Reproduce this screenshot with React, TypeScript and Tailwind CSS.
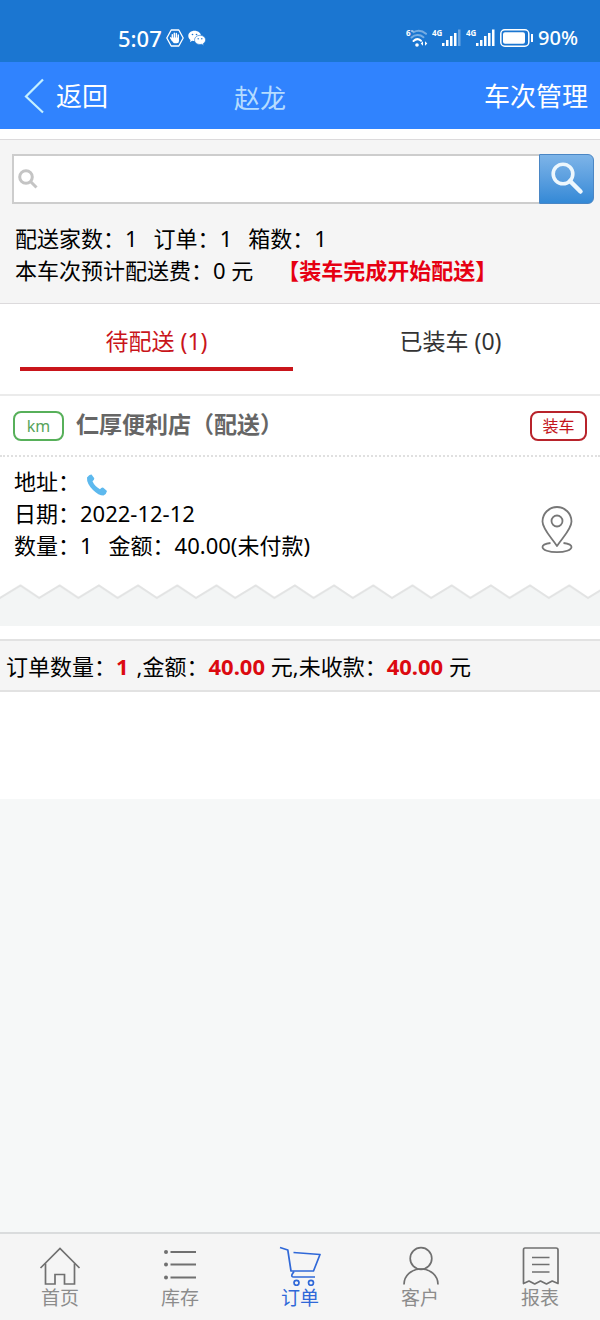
import React from 'react';

const summary = [
  { label: '配送家数：', value: '1' },
  { label: '订单：', value: '1' },
  { label: '箱数：', value: '1' },
];

const HomeIcon = () => (
  <svg viewBox="0 0 42 40" className="w-[42px] h-10" fill="none" stroke="currentColor" strokeWidth="1.7">
    <path d="M1.5 22 21 2.5 40.500 22" />
    <path d="M6.500 17.500V38H16v-9.500h9.500V38h10V17.500" />
  </svg>
);

const ListIcon = () => (
  <svg viewBox="0 0 42 40" className="w-[42px] h-10" fill="none" stroke="currentColor" strokeWidth="2">
    <path d="M11.500 6H37M11.500 18.500H37M11.500 31.500H37" />
    <g fill="currentColor" stroke="none">
      <circle cx="7" cy="6" r="2" />
      <circle cx="7" cy="18.500" r="2" />
      <circle cx="7" cy="31.500" r="2" />
    </g>
  </svg>
);

const CartIcon = () => (
  <svg viewBox="0 0 42 40" className="w-[42px] h-10" fill="none" stroke="currentColor" strokeWidth="1.700" strokeLinejoin="round">
    <path d="M1 1.500 8.800 4 12 25h22.500L41 8.500 14.500 6.500" />
    <path d="M15 25.500 13 28.500q-.8 2.500 1.500 2.500H36" />
    <circle cx="17.500" cy="36.800" r="2.500" />
    <circle cx="32" cy="36.800" r="2.500" />
  </svg>
);

const UserIcon = () => (
  <svg viewBox="0 0 42 40" className="w-[42px] h-10" fill="none" stroke="currentColor" strokeWidth="1.700">
    <circle cx="22" cy="12.500" r="10.800" />
    <path d="M5 38.500c0-9 7.500-15.500 17-15.500s17 6.500 17 15.500" />
  </svg>
);

const ReceiptIcon = () => (
  <svg viewBox="0 0 42 40" className="w-[42px] h-10" fill="none" stroke="currentColor" strokeWidth="1.700" strokeLinejoin="round">
    <path d="M6 2h31q2 0 2 2v33.500L33.200 35 27.500 38 21.500 35 15.700 38 10 35 4.500 37.500V4q0-2 1.500-2Z" />
    <path d="M13 11.500h17.500M13 18.500h17.500M13 26h17.500" />
  </svg>
);

const navItems = [
  { label: '首页', icon: HomeIcon, active: false },
  { label: '库存', icon: ListIcon, active: false },
  { label: '订单', icon: CartIcon, active: true },
  { label: '客户', icon: UserIcon, active: false },
  { label: '报表', icon: ReceiptIcon, active: false },
];

const HandIcon = () => (
  <svg viewBox="0 0 18 18" className="w-[18px] h-[18px]">
    <path d="M5.200 1h7.600L17.200 9l-4.400 8H5.200L.8 9Z" fill="none" stroke="#fff" strokeWidth="1.300" strokeLinejoin="round" />
    <path d="M6.300 9.500V5.600M8.300 9V4.300M10.300 9V4.500M12.300 9.500V6M4.600 8.800l2 2.800" stroke="#fff" strokeWidth="1.400" strokeLinecap="round" />
    <path d="M5.700 8.500H13V12q0 2.300-2.300 2.300H8.500q-1.200 0-2.800-3Z" fill="#fff" />
  </svg>
);

const WechatIcon = () => (
  <svg viewBox="0 0 18 16" className="w-[18px] h-4">
    <path d="M6.500.8C3 .8.3 3 .3 5.900c0 1.600.9 3 2.200 4L2 12l2.300-1.200c3.500 1 8.700-.6 8.700-4.900C13 3 10 .8 6.500.8Z" fill="#fff" />
    <path d="M12 5.300c-3 0-5.500 2-5.500 4.600s2.400 4.600 5.500 4.600l1.700-.2 2 1.100-.5-1.800c1.400-.8 2.400-2.200 2.400-3.700 0-2.600-2.600-4.600-5.600-4.600Z" fill="#fff" stroke="#1b76d1" strokeWidth=".6" />
    <g fill="#1b76d1">
      <circle cx="4.500" cy="4.500" r=".8" />
      <circle cx="8.500" cy="4.500" r=".8" />
      <circle cx="10.200" cy="8.700" r=".7" />
      <circle cx="13.800" cy="8.700" r=".7" />
    </g>
  </svg>
);

const WifiIcon = () => (
  <svg viewBox="0 0 22 20" className="w-[22px] h-5" fill="none" stroke="#fff" strokeLinecap="round">
    <text x="0" y="8" fill="#fff" stroke="none" fontSize="8" fontWeight="700">6</text>
    <path d="M5.500 3h1.500" strokeWidth="1" />
    <path d="M7.500 4.200c4-2.200 9-1.500 12.500 1.600" strokeWidth="2" opacity=".4" />
    <path d="M5.500 9.500c3.500-3.200 8.500-3.200 12-.3" strokeWidth="2" opacity=".4" />
    <path d="M7.500 13c2.300-2.200 5.300-2.200 7.500-.2" strokeWidth="2" />
    <circle cx="11" cy="17" r="1.800" fill="#fff" stroke="none" />
    <path d="m17 13.300-2.300 2.200 2.300 2.200Zm2 0 2.300 2.200-2.300 2.200Z" fill="#fff" stroke="none" />
  </svg>
);

const SignalIcon = ({ weak }: { weak?: boolean }) => (
  <svg viewBox="0 0 30 20" className="w-[30px] h-5" fill="#fff">
    <text x="0" y="8" fontSize="8" fontWeight="700">4G</text>
    <rect x="10" y="15" width="2.500" height="3" />
    <rect x="14" y="12" width="2.500" height="6" />
    <rect x="18" y="8" width="2.500" height="10" />
    <rect x="22" y="5" width="2.500" height="13" />
    <rect x="26" y="1.500" width="2.500" height="16.500" opacity={weak ? 0.35 : 1} />
  </svg>
);

const BatteryIcon = () => (
  <svg viewBox="0 0 34 18" className="w-[34px] h-[18px]" fill="none" stroke="#fff">
    <rect x=".8" y=".8" width="28" height="16.400" rx="4" strokeWidth="1.500" />
    <rect x="3" y="3.200" width="22" height="11.600" rx="2" fill="#fff" stroke="none" />
    <path d="M32 5v8" strokeWidth="2" />
  </svg>
);

const PinIcon = () => (
  <svg viewBox="0 0 32 48" className="w-8 h-12" fill="none" stroke="#777" strokeWidth="1.800">
    <path d="M16 40C10 31 1.500 23 1.500 15.500a14.500 14.500 0 0 1 29 0C30.500 23 22 31 16 40Z" strokeLinejoin="round" />
    <circle cx="16" cy="15" r="5.500" />
    <path d="M9.500 37C4.500 37.600 1.500 39 1.500 41c0 3 6.500 5.200 14.500 5.200S30.500 44 30.500 41c0-2-3-3.400-8-4" />
  </svg>
);

const PhoneIcon = () => (
  <svg viewBox="0 0 22 22" className="w-[22px] h-[22px]" fill="#5db9ee">
    <path d="M1 3.500Q3.500.2 5.500.500L8.300 4.200Q8.500 5.800 6.500 7.200 8.500 12 14 15.200 15.500 13.200 17.300 13.700L21 17Q20.500 20 17.500 21.500 12.500 21.500 7 16 .5 9.500 1 3.500Z" />
  </svg>
);

// torn-paper edge that closes the order card
const ZigzagEdge = () => (
  <svg className="block w-full h-11" aria-hidden="true">
    <defs>
      <pattern id="zigzag" width="39.200" height="44" patternUnits="userSpaceOnUse">
        <path d="M-1 16.700 0 16 20.500 3.500 39.200 16l1 .7V45H-1Z" fill="#f3f5f5" />
        <path d="M-1 16.700 0 16 20.500 3.500 39.200 16l1 .7" fill="none" stroke="#e2e3e3" strokeWidth="2" />
      </pattern>
    </defs>
    <rect width="100%" height="44" fill="url(#zigzag)" />
  </svg>
);

export default function App() {
  const [tab, setTab] = React.useState<'pending' | 'loaded'>('pending');
  const [keyword, setKeyword] = React.useState('');

  const tabClass = (active: boolean) =>
    active
      ? 'h-12 border-b-4 border-[#c9151b] pb-2 text-[#c9151b]'
      : 'h-12 border-b-4 border-transparent pb-2 text-[#333]';

  return (
    <div className="min-h-screen flex flex-col bg-[#f6f8f8] text-[22px] leading-8 text-black font-['Noto_Sans','Noto_Sans_CJK_SC',sans-serif]">
      <div className="h-[62px] pt-[14px] pl-[118px] pr-[22px] flex items-center justify-between bg-[#1b76d1] text-white font-medium">
        <div className="flex items-center gap-1">
          <span>5:07</span>
          <HandIcon />
          <WechatIcon />
        </div>
        <div className="flex items-center gap-1">
          <WifiIcon />
          <SignalIcon weak />
          <SignalIcon />
          <BatteryIcon />
          <span className="text-xl">90%</span>
        </div>
      </div>

      <header className="h-[67px] pl-6 pr-3 grid grid-cols-[210px_1fr_auto] items-center bg-[#3083fe] text-[26px] text-white">
        <button className="flex items-center gap-3 text-left">
          <svg viewBox="0 0 20 36" className="w-5 h-9" fill="none" stroke="#c4f0ff" strokeWidth="2.200">
            <path d="M19 1.500 2 18.500l17 16" />
          </svg>
          <span>返回</span>
        </button>
        <h1 className="pt-1 text-[#b5dcff]">赵龙</h1>
        <button>车次管理</button>
      </header>

      <main className="flex-1">
        <section className="border-t-[10px] border-white bg-[#f5f5f5]">
          <div className="border-y border-[#dcdadc] pt-[14px] pb-[17px]">
            <form className="ml-3 mr-1.5 h-[50px] flex" onSubmit={(e) => e.preventDefault()}>
              <label className="flex-1 flex items-center gap-2 pl-1 border-2 border-r-0 border-[#cdcdcd] bg-white">
                <svg viewBox="0 0 20 20" className="w-5 h-5" fill="none" stroke="#c4c4c4" strokeWidth="3">
                  <circle cx="8" cy="8" r="6.300" />
                  <path d="m12.500 12.500 6 6" />
                </svg>
                <input
                  type="text"
                  aria-label="搜索"
                  value={keyword}
                  onChange={(e) => setKeyword(e.target.value)}
                  className="flex-1 min-w-0 outline-none"
                />
              </label>
              <button
                type="submit"
                aria-label="搜索"
                className="w-[55px] flex items-center justify-center rounded-r-md border border-[#4a86c4] bg-linear-to-b from-[#7db4e8] to-[#3389d6]"
              >
                <svg viewBox="0 0 34 34" className="w-[34px] h-[34px]" fill="none" stroke="#edf7fd" strokeLinecap="round">
                  <circle cx="13" cy="12" r="9.800" strokeWidth="3.600" />
                  <path d="m20 19 10.500 10.500" strokeWidth="4.500" />
                </svg>
              </button>
            </form>
            <div className="pt-[18px] px-[15px]">
              <div className="flex gap-4">
                {summary.map((item) => (
                  <p key={item.label}>{item.label}{item.value}</p>
                ))}
              </div>
              <div className="flex gap-6">
                <p>本车次预计配送费：0 元</p>
                <button className="font-bold text-[#e60012]">【装车完成开始配送】</button>
              </div>
            </div>
          </div>
        </section>

        <section className="bg-white">
          <div className="h-[92px] pt-[19px] pl-5 pr-[13px] grid grid-cols-2 gap-[21px] items-start border-b-2 border-[#ebebeb] text-[23px]">
            <button className={tabClass(tab === 'pending')} onClick={() => setTab('pending')}>待配送 (1)</button>
            <button className={tabClass(tab === 'loaded')} onClick={() => setTab('loaded')}>已装车 (0)</button>
          </div>

          <article>
            <div className="h-[61px] px-[13px] flex items-center gap-3 border-b-2 border-dotted border-[#e0e0e0]">
              <span className="w-[51px] h-[30px] flex items-center justify-center rounded-lg border-2 border-[#57b05a] text-base text-[#57a45a]">km</span>
              <h2 className="flex-1 pb-1 text-[23px] font-bold text-[#666]">仁厚便利店（配送）</h2>
              <button className="w-[57px] h-[30px] flex items-center justify-center rounded-lg border-2 border-[#b8232b] text-base text-[#c4161c]">装车</button>
            </div>
            <div className="h-[125px] pt-2 pl-[14px] pr-[27px] flex items-center justify-between">
              <div className="h-full">
                <div className="flex gap-1.5">
                  <span>地址：</span>
                  <button aria-label="拨打电话" className="h-8 pt-2"><PhoneIcon /></button>
                </div>
                <p>日期：2022-12-12</p>
                <div className="flex gap-4">
                  <p>数量：1</p>
                  <p>金额：40.00(未付款)</p>
                </div>
              </div>
              <button aria-label="地图导航" className="pt-3"><PinIcon /></button>
            </div>
            <ZigzagEdge />
          </article>
        </section>

        <section className="pt-[13px] pb-[107px] bg-white">
          <div className="h-[53px] px-1.5 flex items-center gap-2 border-y-2 border-[#e2e2e2] bg-[#f5f5f5]">
            <p>订单数量：<b className="text-[#dc0a10]">1</b></p>
            <p>,金额：<b className="text-[#dc0a10]">40.00</b> 元,未收款：<b className="text-[#dc0a10]">40.00</b> 元</p>
          </div>
        </section>
      </main>

      <nav className="h-[88px] pt-3 grid grid-cols-5 border-t-2 border-[#dadcdd] bg-[#f5f5f5] text-[19px] leading-6">
        {navItems.map(({ label, icon: Icon, active }) => (
          <a
            key={label}
            href="#"
            className={active ? 'flex flex-col items-center text-[#2f68d8]' : 'flex flex-col items-center text-[#707070]'}
          >
            <Icon />
            <span className={active ? '' : 'text-[#8c8c8c]'}>{label}</span>
          </a>
        ))}
      </nav>
    </div>
  );
}
